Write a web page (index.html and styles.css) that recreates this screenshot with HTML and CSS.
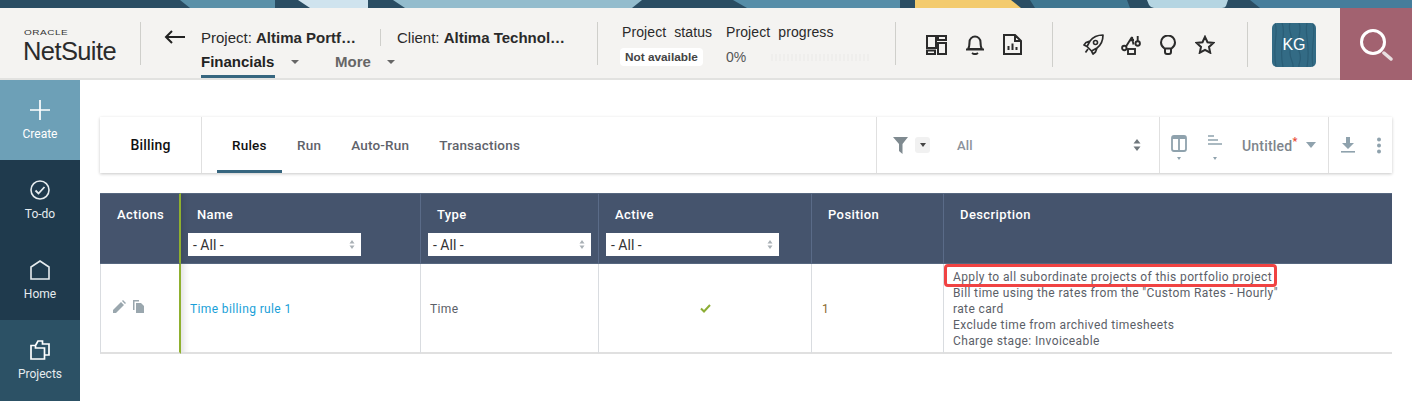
FILE: index.html
```html
<!DOCTYPE html>
<html lang="en">
<head>
<meta charset="utf-8">
<title>Billing Rules</title>
<link rel="stylesheet" href="styles.css">
</head>
<body>
<svg class="band" width="1412" height="8" viewBox="0 0 1412 8" aria-hidden="true">
  <rect width="1412" height="8" fill="#2a4d63"/>
  <polygon points="180,0 275,0 275,8 190,8" fill="#5a90a8"/>
  <polygon points="298,0 368,0 368,8 310,8" fill="#cfe3ee"/>
  <polygon points="393,0 642,0 632,8 405,8" fill="#93bccd"/>
  <polygon points="733,0 900,0 900,8 747,8" fill="#568da8"/>
  <polygon points="915,0 1011,0 1021,8 915,8" fill="#f3cb6e"/>
  <polygon points="1030,0 1127,0 1130,8 1035,8" fill="#3f7690"/>
  <path d="M1147 0h81l-2 6q-1 2-4 2h-68q-3 0-5-3z" fill="#b5d5e2"/>
  <polygon points="1250,0 1412,0 1412,8 1260,8" fill="#467d9b"/>
</svg>

<header class="topbar">
  <div class="logo">
    <span class="logo-oracle">ORACLE</span>
    <span class="logo-name">NetSuite</span>
  </div>
  <div class="crumbs">
    <svg class="back" width="22" height="14" viewBox="0 0 22 14"><path d="M21 7H2M8 1 2 7l6 6" fill="none" stroke="#222" stroke-width="2"/></svg>
    <div class="crumb-main">
      <div class="crumb-line">
        <span class="crumb crumb-project">Project: <b>Altima Portf…</b></span>
        <span class="crumb crumb-client">Client: <b>Altima Technol…</b></span>
      </div>
      <nav class="topnav">
        <a class="topnav-item is-active">Financials</a><i class="caret caret-a"></i>
        <a class="topnav-item topnav-more">More</a><i class="caret caret-b"></i>
      </nav>
    </div>
  </div>
  <div class="status">
    <div class="status-col">
      <span class="status-label">Project&nbsp; status</span>
      <span class="status-pill">Not available</span>
    </div>
    <div class="status-col status-col-progress">
      <span class="status-label">Project&nbsp; progress</span>
      <span class="status-value">0%<i class="progress-track"></i></span>
    </div>
  </div>
  <div class="icons icons-a">
    <svg width="21" height="20" viewBox="0 0 21 20"><g fill="none" stroke="#2b2b2b" stroke-width="2"><rect x="1" y="1" width="9" height="12"/><rect x="1" y="15.500" width="8" height="3.500"/><rect x="12" y="1" width="8" height="4"/><rect x="12" y="8" width="8" height="11"/></g></svg>
    <svg width="20" height="21" viewBox="0 0 20 21"><path d="M3 15c1.500-2 1.500-4 1.500-7a5.500 5.500 0 0 1 11 0c0 3 0 5 1.500 7ZM1 15.500h18M7 19c2 1.500 4 1.500 6 0" fill="none" stroke="#2b2b2b" stroke-width="2"/></svg>
    <svg width="19" height="21" viewBox="0 0 19 21"><path d="M1 1h11l6 6v13H1ZM12 1v6h6M5.500 16v-4M9.500 16V9.500M13.500 16v-3" fill="none" stroke="#2b2b2b" stroke-width="2"/></svg>
  </div>
  <div class="icons icons-b">
    <svg width="21" height="21" viewBox="0 0 21 21"><path d="M7 7C10 3 15 1 20 1 20 6 18 11 14 14L12.500 18 10 20 8.500 17 4 12.500 1 11 3 8.500Z M4 12.500 7 7M8.500 17 14 14" fill="none" stroke="#2b2b2b" stroke-width="1.700" stroke-linejoin="round"/><circle cx="12.500" cy="8.500" r="2" fill="none" stroke="#2b2b2b" stroke-width="1.600"/><path d="M5 15 2.500 18.500" stroke="#2b2b2b" stroke-width="1.700"/></svg>
    <svg width="20" height="20" viewBox="0 0 20 20"><g fill="none" stroke="#2b2b2b" stroke-width="1.900"><circle cx="3.300" cy="13" r="2.200"/><circle cx="16.700" cy="8.500" r="2.200"/><path d="M5 11.500 11 2M8.500 5.500l4.500-.5M16.700 6.300V1M11 2l1.500 7.500"/><rect x="7" y="14" width="7" height="5"/></g></svg>
    <svg width="16" height="20" viewBox="0 0 16 20"><path d="M4.500 13.500C2.500 12 1 10 1 7.500a7 7 0 0 1 14 0c0 2.500-1.500 4.500-3.500 6ZM4 13.500h8M5 13.500V17q0 2 2 2h2q2 0 2-2v-3.500" fill="none" stroke="#2b2b2b" stroke-width="2"/></svg>
    <svg width="20" height="19" viewBox="0 0 20 19"><path d="m10 1.800 2.500 5.400 5.900.7-4.400 4 1.200 5.800L10 14.800l-5.200 2.900L6 11.900l-4.400-4 5.900-.7Z" fill="none" stroke="#2b2b2b" stroke-width="2"/></svg>
  </div>
  <div class="avatar-wrap">
    <div class="avatar">
      <svg class="avatar-grain" width="44" height="44" viewBox="0 0 44 44" aria-hidden="true"><path d="M3 0c4 10-3 20 1 44M10 0c5 12-4 22 1 44M18 0c-3 9 5 15 1 24s3 14 2 20M27 0c4 9-4 19 0 28s-1 12 0 16M35 0c-3 12 4 20 0 44M41 0c3 14-3 24 0 44" fill="none" stroke="#2a5d76" stroke-width="1.200"/></svg>
      <span class="avatar-text">KG</span>
    </div>
  </div>
  <div class="search">
    <svg width="34" height="34" viewBox="0 0 34 34"><circle cx="14" cy="14" r="11.500" fill="none" stroke="#fff" stroke-width="3"/><path d="m25 25 7 6" stroke="#e9dfe1" stroke-width="3.500" stroke-linecap="round"/></svg>
  </div>
</header>

<div class="shell">
  <aside class="sidebar">
    <a class="side-item side-create">
      <svg width="20" height="20" viewBox="0 0 20 20"><path d="M10 0v20M0 10h20" stroke="#fff" stroke-width="1.700"/></svg>
      <span>Create</span>
    </a>
    <a class="side-item">
      <svg width="20" height="20" viewBox="0 0 20 20"><circle cx="10" cy="10" r="9" fill="none" stroke="#e6ecef" stroke-width="1.600"/><path d="m5.500 10.500 3 3 6-6.500" fill="none" stroke="#e6ecef" stroke-width="1.800"/></svg>
      <span>To-do</span>
    </a>
    <a class="side-item">
      <svg width="20" height="20" viewBox="0 0 20 20"><path d="M1 19V7l9-6 9 6v12Z" fill="none" stroke="#e6ecef" stroke-width="1.600"/></svg>
      <span>Home</span>
    </a>
    <a class="side-item side-current">
      <svg width="20" height="20" viewBox="0 0 20 20"><path d="M1 5.500h4.500V8H14.500v11H1ZM5.500 5.500 8 1h4.500v3H19v11h-4.500" fill="none" stroke="#fff" stroke-width="1.700"/></svg>
      <span>Projects</span>
    </a>
  </aside>

  <main class="content">
    <section class="toolbar">
      <div class="tb-title">Billing</div>
      <nav class="tabs">
        <a class="tab is-active">Rules</a>
        <a class="tab">Run</a>
        <a class="tab">Auto-Run</a>
        <a class="tab">Transactions</a>
      </nav>
      <div class="tb-filter">
        <svg width="15" height="17" viewBox="0 0 15 17"><path d="M0 0h15L9.500 7v10L6 14V7Z" fill="#7f8a90"/></svg>
        <span class="filter-btn"><i class="mini-caret"></i></span>
        <span class="filter-value">All</span>
        <svg class="updown" width="8" height="12" viewBox="0 0 8 12"><path d="M4 0l3.500 4.500h-7ZM4 12 .5 7.500h7Z" fill="#6f777c"/></svg>
      </div>
      <div class="tb-view">
        <span class="tool">
          <svg width="16" height="17" viewBox="0 0 16 17"><path d="M1 3q0-2 2-2h10q2 0 2 2v11q0 2-2 2H3q-2 0-2-2ZM8 3v13" fill="none" stroke="#8fa2ad" stroke-width="1.800"/><rect x="1" y="1" width="14" height="3" fill="#8fa2ad"/></svg>
          <i class="tiny-caret"></i>
        </span>
        <span class="tool">
          <svg width="14" height="13" viewBox="0 0 14 13"><path d="M0 1h6M0 5h10M0 9h14" stroke="#8fa2ad" stroke-width="1.500" fill="none"/></svg>
          <i class="tiny-caret"></i>
        </span>
        <span class="view-name">Untitled<sup class="asterisk">*</sup></span>
        <i class="view-caret"></i>
      </div>
      <div class="tb-actions">
        <svg width="14" height="16" viewBox="0 0 14 16"><path d="M5 0h4v6h4L7 12 1 6h4Z" fill="#8fa2ad"/><rect y="14" width="14" height="1.600" fill="#8fa2ad"/></svg>
        <svg width="6" height="17" viewBox="0 0 6 17"><circle cx="3" cy="2.500" r="2" fill="#8fa2ad"/><circle cx="3" cy="8.500" r="2" fill="#8fa2ad"/><circle cx="3" cy="14.500" r="2" fill="#8fa2ad"/></svg>
      </div>
    </section>

    <table class="grid">
      <colgroup>
        <col class="c-actions"><col class="c-name"><col class="c-type"><col class="c-active"><col class="c-pos"><col class="c-desc">
      </colgroup>
      <thead>
        <tr>
          <th class="th-actions"><span class="th-label">Actions</span></th>
          <th class="th-name"><span class="th-label">Name</span><span class="select">- All -<svg width="6" height="9" viewBox="0 0 6 9"><path d="M3 0l2.500 3.500h-5ZM3 9 .5 5.500h5Z" fill="#a9b0b5"/></svg></span></th>
          <th><span class="th-label">Type</span><span class="select select-type">- All -<svg width="6" height="9" viewBox="0 0 6 9"><path d="M3 0l2.500 3.500h-5ZM3 9 .5 5.500h5Z" fill="#a9b0b5"/></svg></span></th>
          <th><span class="th-label">Active</span><span class="select select-active">- All -<svg width="6" height="9" viewBox="0 0 6 9"><path d="M3 0l2.500 3.500h-5ZM3 9 .5 5.500h5Z" fill="#a9b0b5"/></svg></span></th>
          <th><span class="th-label">Position</span></th>
          <th><span class="th-label">Description</span></th>
        </tr>
      </thead>
      <tbody>
        <tr>
          <td class="td-actions">
            <svg width="13" height="13" viewBox="0 0 13 13"><path d="M0 13V10L8 2l3 3-8 8ZM9 1l1-1 3 3-1 1Z" fill="#9aa7ae"/></svg>
            <svg width="11" height="13" viewBox="0 0 11 13"><path d="M0 0h6v1.500H1.500V10H0Z" fill="#9aa7ae"/><path d="M3 3h5l3 3v7H3Z" fill="#9aa7ae"/></svg>
          </td>
          <td class="td-name"><a class="link">Time billing rule 1</a></td>
          <td class="td-type">Time</td>
          <td class="td-active"><svg width="11" height="9" viewBox="0 0 11 9"><path d="M1 4.500 4 7.500 10 1" fill="none" stroke="#8cad35" stroke-width="2"/></svg></td>
          <td class="td-pos">1</td>
          <td class="td-desc">
            <span class="mark" aria-hidden="true"></span>
            Apply to all subordinate projects of this portfolio project<br>
            Bill time using the rates from the "Custom Rates - Hourly"<br>
            rate card<br>
            Exclude time from archived timesheets<br>
            Charge stage: Invoiceable
          </td>
        </tr>
      </tbody>
    </table>
  </main>
</div>
</body>
</html>
```
FILE: styles.css
```css
* { box-sizing: border-box; }
html, body { margin: 0; height: 401px; overflow: hidden; background: #fff; }
body { font-family: "Liberation Sans", Arial, sans-serif; color: #222; }
.band { display: block; }

/* Top bar */
.topbar {
  display: flex;
  height: 72px;
  background: #f4f3f1;
  border-bottom: 2px solid #e2e2e0;
}
.logo {
  width: 141px;
  margin: 14px 0 13px;
  border-right: 1px solid #cfcfcb;
  padding: 7px 0 0 24px;
  display: flex;
  flex-direction: column;
}
.logo-oracle { font-size: 8px; letter-spacing: .4px; line-height: 7px; color: #333; transform: scaleX(1.25); transform-origin: 0 0; }
.logo-name { font-size: 25.500px; line-height: 24px; letter-spacing: -.6px; color: #2b2b2b; margin: 3px 0 0 -1px; }

.crumbs {
  width: 457px;
  display: flex;
  margin: 14px 0 13px;
  border-right: 1px solid #cfcfcb;
  padding-left: 23px;
}
.back { margin-top: 8px; flex: none; }
.crumb-main { margin-left: 15px; }
.crumb-line { display: flex; height: 17px; margin-top: 7px; align-items: center; font-size: 15px; }
.crumb { white-space: nowrap; color: #2a2a2a; }
.crumb-project { width: 179px; }
.crumb-client { border-left: 1px solid #cfcfcb; padding-left: 16px; }
.topnav { display: flex; align-items: center; margin-top: 8px; height: 24px; }
.topnav-item { font-size: 15px; font-weight: 700; color: #222; line-height: 16px; height: 24px; white-space: nowrap; }
.topnav-item.is-active { border-bottom: 3px solid #36667f; width: 74px; }
.topnav-more { color: #666; }
.caret {
  width: 0; height: 0; margin-top: -9px;
  border: 4px solid transparent; border-top: 4px solid #666; border-bottom: 0;
}
.caret-a { margin-left: 16px; margin-right: 36px; }
.caret-b { margin-left: 16px; }

.status {
  display: flex;
  width: 298px;
  margin: 14px 0 13px;
  border-right: 1px solid #cfcfcb;
  padding-left: 24px;
}
.status-col { display: flex; flex-direction: column; align-items: flex-start; width: 104px; flex: none; }
.status-col-progress { width: 150px; }
.status-label { font-size: 14px; line-height: 17px; margin-top: 2px; color: #2a2a2a; white-space: nowrap; letter-spacing: .1px; }
.status-pill {
  margin-top: 7px;
  margin-left: -2px;
  padding: 0 5px;
  height: 18px;
  line-height: 18px;
  background: #fff;
  border-radius: 4px;
  font-size: 11.800px;
  font-weight: 700;
  color: #444;
  white-space: nowrap;
}
.status-value { margin-top: 7px; font-size: 14px; color: #555; line-height: 18px; display: flex; align-items: center; }
.progress-track { width: 100px; height: 7px; margin-left: 25px; background: repeating-linear-gradient(90deg, #efeeec 0 2px, #f4f3f1 2px 4px); }

.icons { display: flex; align-items: center; height: 45px; margin-top: 14px; border-right: 1px solid #cfcfcb; }
.icons-a { width: 157px; padding-left: 30px; gap: 18px; }
.icons-b { width: 195px; padding-left: 30px; gap: 17px; }
.icons-b svg:nth-child(3) { margin-left: 2px; }
.icons-b svg:last-child { margin-left: 2px; }
.avatar-wrap { width: 92px; padding: 15px 0 0 24px; }
.avatar {
  position: relative;
  width: 44px;
  height: 44px;
  border-radius: 5px;
  background: #336b85;
  overflow: hidden;
  display: flex;
  align-items: center;
  justify-content: center;
}
.avatar-grain { position: absolute; inset: 0; }
.avatar-text { position: relative; color: #fff; font-size: 16px; }
.search {
  width: 72px;
  height: 72px;
  margin-bottom: -2px;
  background: #a26270;
  padding: 20px 0 0 19px;
}

/* Sidebar */
.shell { display: flex; height: 321px; }
.sidebar { width: 80px; flex: none; background: #1f3a4d; height: 321px; }
.side-item {
  height: 80px;
  display: flex;
  flex-direction: column;
  align-items: center;
  padding-top: 20px;
  font-family: Roboto, sans-serif;
  font-size: 12px;
  color: #e6ecef;
}
.side-item span { margin-top: 7px; line-height: 14px; }
.side-create { background: #6da0b7; color: #fff; }
.side-current { background: #2c5165; height: 81px; }

/* Main */
.content { flex: 1; padding: 37px 20px 0; font-family: Roboto, sans-serif; }
.toolbar {
  display: flex;
  height: 56px;
  background: #fff;
  box-shadow: 0 1px 3px rgba(0,0,0,.22);
  font-size: 13.500px;
  font-weight: 500;
  letter-spacing: .2px;
}
.tb-title { width: 102px; border-right: 1px solid #e0e0e0; text-align: center; line-height: 57px; color: #111; font-size: 14px; }
.tabs { display: flex; width: 674px; padding-left: 15px; }
.tab { padding: 0 15px; line-height: 57px; color: #5f636b; height: 56px; }
.tab.is-active { color: #111; border-bottom: 3px solid #36667f; width: 65px; }
.tb-filter {
  width: 283px;
  display: flex;
  align-items: center;
  padding: 0 18px 0 16px;
  border-left: 1px solid #e0e0e0;
}
.filter-btn {
  width: 15px; height: 16px; margin-left: 7px; background: #f1f1f1; border-radius: 3px;
  display: flex; align-items: center; justify-content: center;
}
.mini-caret { border: 3px solid transparent; border-top: 4px solid #444; border-bottom: 0; }
.filter-value { margin-left: 27px; color: #8b929a; flex: 1; font-size: 13px; }
.tb-view {
  width: 169px;
  display: flex;
  align-items: center;
  padding-left: 9px;
  border-left: 1px solid #e0e0e0;
}
.tool { display: flex; flex-direction: column; align-items: center; width: 20px; margin-top: 4px; }
.tool + .tool { margin-left: 16px; }
.tiny-caret { margin-top: 5px; border: 2.500px solid transparent; border-top: 3px solid #8fa2ad; border-bottom: 0; }
.tool + .tool .tiny-caret { margin-top: 9px; }
.view-name { margin: 2px 0 0 17px; color: #7e858c; font-size: 14px; white-space: nowrap; letter-spacing: .2px; }
.asterisk { color: #e8452f; font-size: 11px; line-height: 0; }
.view-caret { margin-left: 9px; border: 5.500px solid transparent; border-top: 6px solid #8fa2ad; border-bottom: 0; }
.tb-actions {
  flex: 1;
  display: flex;
  align-items: center;
  gap: 21px;
  padding-left: 12px;
  border-left: 1px solid #e0e0e0;
}

/* Table */
.grid {
  margin-top: 20px;
  width: 1292px;
  table-layout: fixed;
  border-collapse: separate;
  border-spacing: 0;
  font-size: 12px;
  color: #5b6068;
}
.c-actions { width: 81px; }
.c-name { width: 239px; }
.c-type { width: 178px; }
.c-active { width: 213px; }
.c-pos { width: 132px; }
.grid th {
  height: 71px;
  vertical-align: top;
  text-align: left;
  padding: 13px 0 0 16px;
  background: #45546d;
  border-top: 1px solid #56677f;
  border-bottom: 1px solid #56677f;
  border-left: 1px solid #5a6b88;
  color: #fff;
  font-size: 13px;
  font-weight: 500;
  letter-spacing: .4px;
}
.grid th:first-child { border-left: 0; padding-left: 17px; }
.grid .th-actions { border-right: 2px solid #8fb02f; }
.grid .th-name { border-left: 0; box-shadow: inset 8px 0 6px -6px rgba(0,0,0,.14); }
.th-label { display: block; line-height: 15px; }
.select {
  display: flex;
  align-items: center;
  justify-content: space-between;
  margin: 11px 0 0 -9px;
  width: 173px;
  height: 23px;
  padding: 0 6px 0 5px;
  background: #fff;
  color: #333;
  font-size: 14px;
  font-weight: 400;
  letter-spacing: 0;
}
.select-type { width: 163px; }
.grid td {
  height: 90px;
  padding: 2px 0 0 9px;
  border-left: 1px solid #d9dce0;
  border-bottom: 2px solid #e0e0e0;
  vertical-align: middle;
  letter-spacing: .38px;
}
.grid .td-actions { border-right: 2px solid #8fb02f; padding: 0 0 0 12px; white-space: nowrap; }
.td-actions svg + svg { margin-left: 4px; }
.grid .td-name { border-left: 0; box-shadow: inset 10px 0 7px -7px rgba(0,0,0,.12); }
.link { color: #1a9fd8; }
.grid .td-active { text-align: center; padding-left: 0; }
.td-pos { color: #8a6a2e; }
.grid .td-pos { padding-left: 10px; }
.grid .td-desc { position: relative; line-height: 16px; padding-right: 100px; color: #5b6068; }
.mark {
  position: absolute;
  left: 0;
  top: 0;
  width: 333px;
  height: 23px;
  border: 3px solid #f04343;
  border-radius: 4px;
}
```
